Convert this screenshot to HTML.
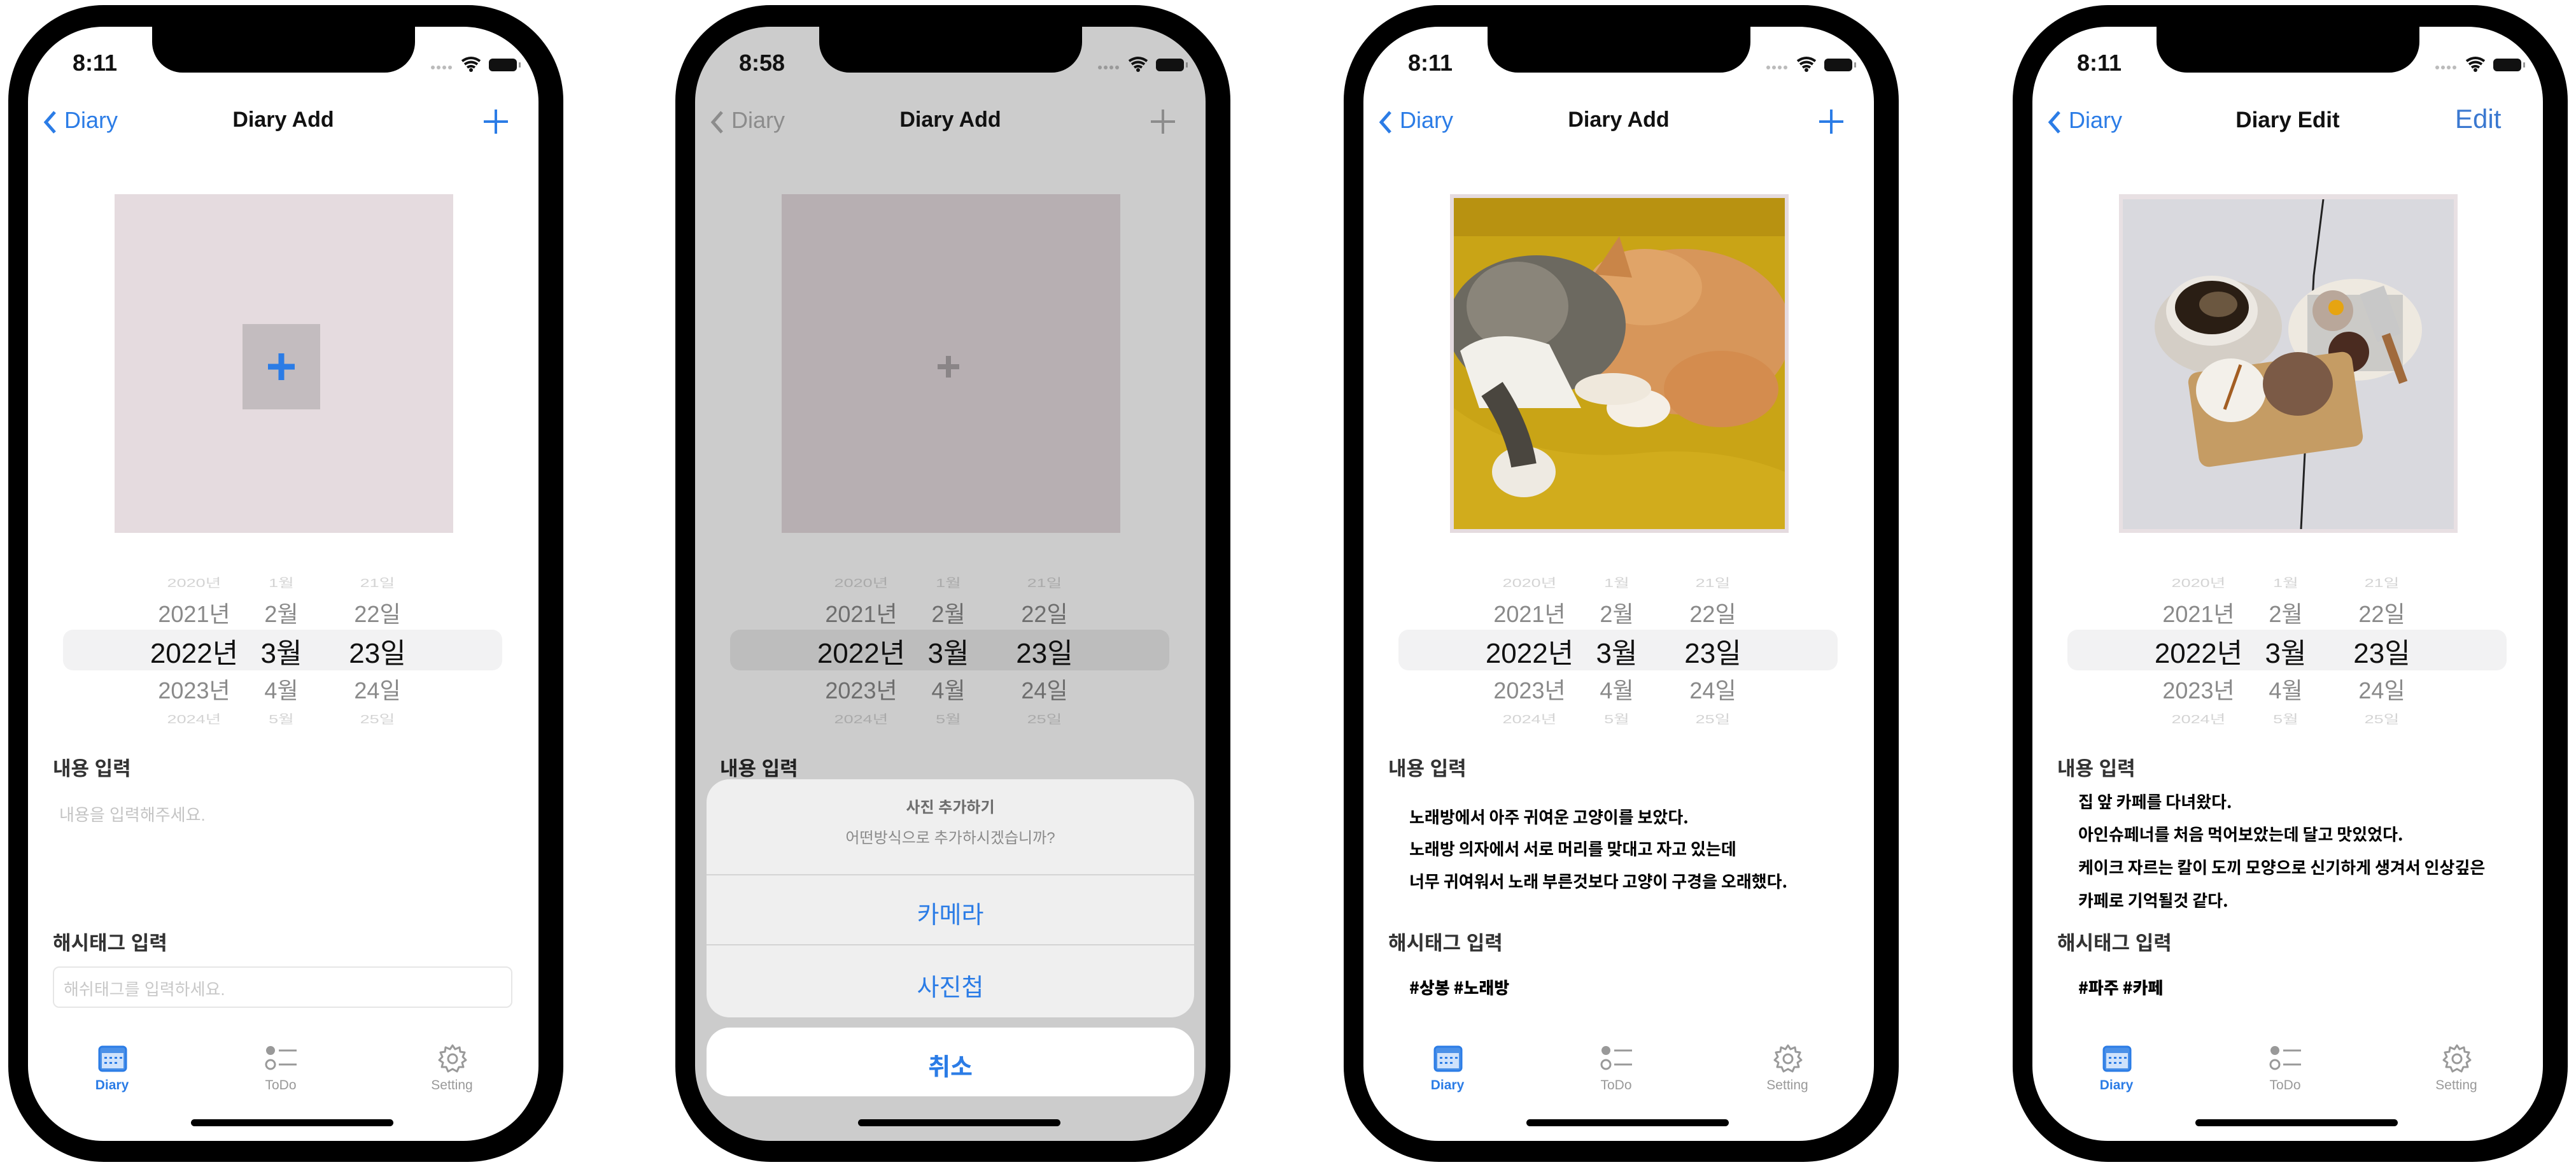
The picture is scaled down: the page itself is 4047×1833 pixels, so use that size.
<!DOCTYPE html>
<html><head><meta charset="utf-8"><style>
*{margin:0;padding:0;box-sizing:border-box}
body{width:4047px;height:1833px;background:#fff;position:relative;overflow:hidden;font-family:"Liberation Sans","Noto Sans CJK KR",sans-serif}
.ph{position:absolute;top:8px;width:872px;height:1817px;background:#000;border-radius:150px}
.sc{position:absolute;left:31px;top:34px;width:802px;height:1750px;background:#fff;border-radius:118px;overflow:hidden}
.a{position:absolute}
.notch{left:195px;top:-2px;width:413px;height:74px;background:#000;border-radius:0 0 48px 48px}
.time{left:60px;top:36px;font-size:36px;font-weight:bold;color:#111;width:90px;text-align:center}
.title{left:0;width:802px;text-align:center;top:127px;font-size:34px;font-weight:bold;color:#111}
.box{left:136px;top:263px;width:532px;height:532px;background:#e5dbdf}
.inner{left:201px;top:204px;width:122px;height:134px;background:#c3bcbf}
.band{left:55px;top:947px;width:690px;height:64px;background:#f2f2f3;border-radius:16px}
.pk{position:absolute;text-align:center;white-space:nowrap;transform:translate(-50%,-50%)}
.r0{font-size:27px;color:#d4d4d4;transform:translate(-50%,-50%) scaleY(.7)}
.r1{font-size:36px;color:#8a8a8a}
.r2{font-size:44px;color:#111}
.lab{left:39px;font-size:31px;font-weight:bold;color:#333}
.hw{left:72px;font-size:26px;color:#000;font-family:"Noto Sans CJK KR",sans-serif;font-weight:bold;white-space:nowrap}
.tab{font-size:21px;color:#999;text-align:center;width:120px;transform:translateX(-50%)}
.home{left:256px;top:1716px;width:318px;height:11px;border-radius:6px;background:#000}
</style></head><body>

<!-- PHONE 1 -->
<div class="ph" style="left:13px"><div class="sc">
<div class="a notch"></div>
<div class="a time">8:11</div>
<svg class="a" style="left:632px;top:44px" width="150" height="30" viewBox="0 0 150 30"><g fill="#bbb"><circle cx="4" cy="20" r="3"/><circle cx="13" cy="20" r="3"/><circle cx="22" cy="20" r="3"/><circle cx="31" cy="20" r="3"/></g><path d="M50 10 Q64 0 78 10 M54 15 Q64 8 74 15 M58 20 Q64 16 70 20" stroke="#111" stroke-width="4" fill="none"/><circle cx="64" cy="24" r="3" fill="#111"/><rect x="92" y="6" width="44" height="20" rx="6" fill="#111"/><rect x="139" y="12" width="3" height="8" fill="#999"/></svg>
<svg class="a" style="left:22px;top:130px" width="26" height="40"><path d="M20 4 L6 20 L20 36" stroke="#2b7ce6" stroke-width="5" fill="none"/></svg>
<div class="a" style="left:57px;top:126px;font-size:36px;color:#2b7ce6">Diary</div>
<div class="a title">Diary Add</div>
<svg class="a" style="left:714px;top:128px" width="42" height="42"><path d="M21 2V40M2 21H40" stroke="#2b7ce6" stroke-width="4"/></svg>
<div class="a box"><div class="a inner"><svg class="a" style="left:36px;top:42px" width="50" height="50"><path d="M25 4V46M4 25H46" stroke="#2b7ce6" stroke-width="9"/></svg></div></div>
<div class="a band"></div>
<div class="pk r0" style="left:261px;top:872px">2020년</div><div class="pk r0" style="left:398px;top:872px">1월</div><div class="pk r0" style="left:549px;top:872px">21일</div>
<div class="pk r1" style="left:261px;top:920px">2021년</div><div class="pk r1" style="left:398px;top:920px">2월</div><div class="pk r1" style="left:549px;top:920px">22일</div>
<div class="pk r2" style="left:261px;top:980px">2022년</div><div class="pk r2" style="left:398px;top:980px">3월</div><div class="pk r2" style="left:549px;top:980px">23일</div>
<div class="pk r1" style="left:261px;top:1040px">2023년</div><div class="pk r1" style="left:398px;top:1040px">4월</div><div class="pk r1" style="left:549px;top:1040px">24일</div>
<div class="pk r0" style="left:261px;top:1086px">2024년</div><div class="pk r0" style="left:398px;top:1086px">5월</div><div class="pk r0" style="left:549px;top:1086px">25일</div>
<div class="a lab" style="top:1140px">내용 입력</div>
<div class="a" style="left:49px;top:1218px;font-size:26px;color:#c4c4c4">내용을 입력해주세요.</div>
<div class="a lab" style="top:1414px">해시태그 입력</div>
<div class="a" style="left:39px;top:1476px;width:722px;height:65px;border:2px solid #e6e6e6;border-radius:10px"></div>
<div class="a" style="left:56px;top:1492px;font-size:26px;color:#c8c8c8">해쉬태그를 입력하세요.</div>
<svg class="a" style="left:110px;top:1598px" width="46" height="44"><rect x="2" y="4" width="42" height="38" rx="5" fill="#4a90e8" stroke="#2b7ce6" stroke-width="3"/><rect x="6" y="14" width="34" height="24" fill="#cfe2fb"/><g fill="#2b7ce6"><rect x="10" y="20" width="4" height="3"/><rect x="18" y="20" width="4" height="3"/><rect x="26" y="20" width="4" height="3"/><rect x="34" y="20" width="4" height="3"/><rect x="10" y="28" width="4" height="3"/><rect x="18" y="28" width="4" height="3"/><rect x="26" y="28" width="4" height="3"/></g></svg>
<div class="a tab" style="left:132px;top:1651px;color:#2b7ce6;font-weight:bold">Diary</div>
<svg class="a" style="left:372px;top:1598px" width="52" height="44"><circle cx="9" cy="10" r="7" fill="#999"/><circle cx="9" cy="32" r="7" fill="none" stroke="#999" stroke-width="3"/><path d="M22 10H50M22 32H50" stroke="#999" stroke-width="3"/></svg>
<div class="a tab" style="left:397px;top:1651px">ToDo</div>
<svg class="a" style="left:643px;top:1597px" width="48" height="48" viewBox="0 0 48 48"><circle cx="24" cy="24" r="7" fill="none" stroke="#999" stroke-width="3"/><path d="M24 3 L28 9 L35 6 L36 13 L43 14 L40 21 L45 26 L39 30 L41 37 L34 37 L31 44 L24 40 L17 44 L14 37 L7 37 L9 30 L3 26 L8 21 L5 14 L12 13 L13 6 L20 9 Z" fill="none" stroke="#999" stroke-width="3" stroke-linejoin="round"/></svg>
<div class="a tab" style="left:666px;top:1651px">Setting</div>
<div class="a home"></div>
</div></div>

<!-- PHONE 2 -->
<div class="ph" style="left:1061px"><div class="sc" style="background:#cccccc">
<div class="a notch"></div>
<div class="a time">8:58</div>
<svg class="a" style="left:632px;top:44px" width="150" height="30" viewBox="0 0 150 30"><g fill="#999"><circle cx="4" cy="20" r="3"/><circle cx="13" cy="20" r="3"/><circle cx="22" cy="20" r="3"/><circle cx="31" cy="20" r="3"/></g><path d="M50 10 Q64 0 78 10 M54 15 Q64 8 74 15 M58 20 Q64 16 70 20" stroke="#111" stroke-width="4" fill="none"/><circle cx="64" cy="24" r="3" fill="#111"/><rect x="92" y="6" width="44" height="20" rx="6" fill="#111"/><rect x="139" y="12" width="3" height="8" fill="#888"/></svg>
<svg class="a" style="left:22px;top:130px" width="26" height="40"><path d="M20 4 L6 20 L20 36" stroke="#8c8c8c" stroke-width="5" fill="none"/></svg>
<div class="a" style="left:57px;top:126px;font-size:36px;color:#8c8c8c">Diary</div>
<div class="a title">Diary Add</div>
<svg class="a" style="left:714px;top:128px" width="42" height="42"><path d="M21 2V40M2 21H40" stroke="#8c8c8c" stroke-width="4"/></svg>
<div class="a box" style="background:#b7afb2"><svg class="a" style="left:237px;top:246px" width="50" height="50"><path d="M25 8V42M8 25H42" stroke="#8a8587" stroke-width="8"/></svg></div>
<div class="a band" style="background:#bdbdbd"></div>
<div class="pk r0" style="left:261px;top:872px;color:#aaa">2020년</div><div class="pk r0" style="left:398px;top:872px;color:#aaa">1월</div><div class="pk r0" style="left:549px;top:872px;color:#aaa">21일</div>
<div class="pk r1" style="left:261px;top:920px;color:#6e6e6e">2021년</div><div class="pk r1" style="left:398px;top:920px;color:#6e6e6e">2월</div><div class="pk r1" style="left:549px;top:920px;color:#6e6e6e">22일</div>
<div class="pk r2" style="left:261px;top:980px">2022년</div><div class="pk r2" style="left:398px;top:980px">3월</div><div class="pk r2" style="left:549px;top:980px">23일</div>
<div class="pk r1" style="left:261px;top:1040px;color:#6e6e6e">2023년</div><div class="pk r1" style="left:398px;top:1040px;color:#6e6e6e">4월</div><div class="pk r1" style="left:549px;top:1040px;color:#6e6e6e">24일</div>
<div class="pk r0" style="left:261px;top:1086px;color:#aaa">2024년</div><div class="pk r0" style="left:398px;top:1086px;color:#aaa">5월</div><div class="pk r0" style="left:549px;top:1086px;color:#aaa">25일</div>
<div class="a lab" style="top:1140px;color:#222">내용 입력</div>
<div class="a" style="left:18px;top:1182px;width:766px;height:374px;background:#efefef;border-radius:36px"></div>
<div class="a" style="left:18px;top:1206px;width:766px;text-align:center;font-size:24px;color:#6e6e6e;font-weight:bold">사진 추가하기</div>
<div class="a" style="left:18px;top:1254px;width:766px;text-align:center;font-size:24px;color:#8a8a8a">어떤방식으로 추가하시겠습니까?</div>
<div class="a" style="left:18px;top:1331px;width:766px;height:2px;background:#d4d4d4"></div>
<div class="a" style="left:18px;top:1364px;width:766px;text-align:center;font-size:38px;color:#2b7ce6">카메라</div>
<div class="a" style="left:18px;top:1441px;width:766px;height:2px;background:#d4d4d4"></div>
<div class="a" style="left:18px;top:1478px;width:766px;text-align:center;font-size:38px;color:#2b7ce6">사진첩</div>
<div class="a" style="left:18px;top:1572px;width:766px;height:108px;background:#fff;border-radius:36px"></div>
<div class="a" style="left:18px;top:1603px;width:766px;text-align:center;font-size:38px;color:#2b7ce6;font-weight:bold">취소</div>
<div class="a home"></div>
</div></div>

<!-- PHONE 3 -->
<div class="ph" style="left:2111px"><div class="sc">
<div class="a notch"></div>
<div class="a time">8:11</div>
<svg class="a" style="left:632px;top:44px" width="150" height="30" viewBox="0 0 150 30"><g fill="#bbb"><circle cx="4" cy="20" r="3"/><circle cx="13" cy="20" r="3"/><circle cx="22" cy="20" r="3"/><circle cx="31" cy="20" r="3"/></g><path d="M50 10 Q64 0 78 10 M54 15 Q64 8 74 15 M58 20 Q64 16 70 20" stroke="#111" stroke-width="4" fill="none"/><circle cx="64" cy="24" r="3" fill="#111"/><rect x="92" y="6" width="44" height="20" rx="6" fill="#111"/><rect x="139" y="12" width="3" height="8" fill="#999"/></svg>
<svg class="a" style="left:22px;top:130px" width="26" height="40"><path d="M20 4 L6 20 L20 36" stroke="#2b7ce6" stroke-width="5" fill="none"/></svg>
<div class="a" style="left:57px;top:126px;font-size:36px;color:#2b7ce6">Diary</div>
<div class="a title">Diary Add</div>
<svg class="a" style="left:714px;top:128px" width="42" height="42"><path d="M21 2V40M2 21H40" stroke="#2b7ce6" stroke-width="4"/></svg>
<div class="a box" style="background:#e5dbdf">
<svg class="a" style="left:6px;top:6px" width="520" height="520" viewBox="0 0 520 520">
<rect width="520" height="520" fill="#c9a416"/>
<rect y="0" width="520" height="60" fill="#b89211"/>
<path d="M0 330 Q120 420 300 400 Q420 390 520 430 L520 520 L0 520Z" fill="#d1ac1c"/>
<ellipse cx="360" cy="210" rx="170" ry="130" fill="#d7965a"/>
<ellipse cx="300" cy="140" rx="90" ry="60" fill="#e0a468"/>
<path d="M220 120 L260 60 L280 125Z" fill="#c98548"/>
<ellipse cx="420" cy="300" rx="90" ry="60" fill="#d48c4e"/>
<ellipse cx="130" cy="200" rx="140" ry="110" fill="#6c6960"/>
<ellipse cx="100" cy="170" rx="80" ry="70" fill="#8a857a"/>
<path d="M10 240 Q60 200 150 230 L200 330 L40 330Z" fill="#f2f0ea"/>
<ellipse cx="110" cy="430" rx="50" ry="40" fill="#eeeae2"/>
<path d="M60 300 Q100 360 110 420" stroke="#4a463f" stroke-width="40" fill="none"/>
<ellipse cx="290" cy="330" rx="50" ry="30" fill="#f5efe6"/>
<ellipse cx="250" cy="300" rx="60" ry="25" fill="#efe8dc"/>
</svg></div>
<div class="a band"></div>
<div class="pk r0" style="left:261px;top:872px">2020년</div><div class="pk r0" style="left:398px;top:872px">1월</div><div class="pk r0" style="left:549px;top:872px">21일</div>
<div class="pk r1" style="left:261px;top:920px">2021년</div><div class="pk r1" style="left:398px;top:920px">2월</div><div class="pk r1" style="left:549px;top:920px">22일</div>
<div class="pk r2" style="left:261px;top:980px">2022년</div><div class="pk r2" style="left:398px;top:980px">3월</div><div class="pk r2" style="left:549px;top:980px">23일</div>
<div class="pk r1" style="left:261px;top:1040px">2023년</div><div class="pk r1" style="left:398px;top:1040px">4월</div><div class="pk r1" style="left:549px;top:1040px">24일</div>
<div class="pk r0" style="left:261px;top:1086px">2024년</div><div class="pk r0" style="left:398px;top:1086px">5월</div><div class="pk r0" style="left:549px;top:1086px">25일</div>
<div class="a lab" style="top:1140px">내용 입력</div>
<div class="a hw" style="top:1222px">노래방에서 아주 귀여운 고양이를 보았다.</div>
<div class="a hw" style="top:1272px">노래방 의자에서 서로 머리를 맞대고 자고 있는데</div>
<div class="a hw" style="top:1323px">너무 귀여워서 노래 부른것보다 고양이 구경을 오래했다.</div>
<div class="a lab" style="top:1414px">해시태그 입력</div>
<div class="a hw" style="top:1490px;font-weight:900">#상봉 #노래방</div>
<svg class="a" style="left:110px;top:1598px" width="46" height="44"><rect x="2" y="4" width="42" height="38" rx="5" fill="#4a90e8" stroke="#2b7ce6" stroke-width="3"/><rect x="6" y="14" width="34" height="24" fill="#cfe2fb"/><g fill="#2b7ce6"><rect x="10" y="20" width="4" height="3"/><rect x="18" y="20" width="4" height="3"/><rect x="26" y="20" width="4" height="3"/><rect x="34" y="20" width="4" height="3"/><rect x="10" y="28" width="4" height="3"/><rect x="18" y="28" width="4" height="3"/><rect x="26" y="28" width="4" height="3"/></g></svg>
<div class="a tab" style="left:132px;top:1651px;color:#2b7ce6;font-weight:bold">Diary</div>
<svg class="a" style="left:372px;top:1598px" width="52" height="44"><circle cx="9" cy="10" r="7" fill="#999"/><circle cx="9" cy="32" r="7" fill="none" stroke="#999" stroke-width="3"/><path d="M22 10H50M22 32H50" stroke="#999" stroke-width="3"/></svg>
<div class="a tab" style="left:397px;top:1651px">ToDo</div>
<svg class="a" style="left:643px;top:1597px" width="48" height="48" viewBox="0 0 48 48"><circle cx="24" cy="24" r="7" fill="none" stroke="#999" stroke-width="3"/><path d="M24 3 L28 9 L35 6 L36 13 L43 14 L40 21 L45 26 L39 30 L41 37 L34 37 L31 44 L24 40 L17 44 L14 37 L7 37 L9 30 L3 26 L8 21 L5 14 L12 13 L13 6 L20 9 Z" fill="none" stroke="#999" stroke-width="3" stroke-linejoin="round"/></svg>
<div class="a tab" style="left:666px;top:1651px">Setting</div>
<div class="a home"></div>
</div></div>

<!-- PHONE 4 -->
<div class="ph" style="left:3162px"><div class="sc">
<div class="a notch"></div>
<div class="a time">8:11</div>
<svg class="a" style="left:632px;top:44px" width="150" height="30" viewBox="0 0 150 30"><g fill="#bbb"><circle cx="4" cy="20" r="3"/><circle cx="13" cy="20" r="3"/><circle cx="22" cy="20" r="3"/><circle cx="31" cy="20" r="3"/></g><path d="M50 10 Q64 0 78 10 M54 15 Q64 8 74 15 M58 20 Q64 16 70 20" stroke="#111" stroke-width="4" fill="none"/><circle cx="64" cy="24" r="3" fill="#111"/><rect x="92" y="6" width="44" height="20" rx="6" fill="#111"/><rect x="139" y="12" width="3" height="8" fill="#999"/></svg>
<svg class="a" style="left:22px;top:130px" width="26" height="40"><path d="M20 4 L6 20 L20 36" stroke="#2b7ce6" stroke-width="5" fill="none"/></svg>
<div class="a" style="left:57px;top:126px;font-size:36px;color:#2b7ce6">Diary</div>
<div class="a title" style="font-size:35px">Diary Edit</div>
<div class="a" style="left:664px;top:121px;font-size:42px;color:#3a78d0">Edit</div>
<div class="a box" style="background:#e8e0e3">
<svg class="a" style="left:6px;top:8px" width="520" height="518" viewBox="0 0 520 518">
<rect width="520" height="518" fill="#d9d9de"/>
<path d="M315 0 L300 120 L280 518" stroke="#222" stroke-width="3" fill="none"/>
<ellipse cx="150" cy="200" rx="100" ry="75" fill="#d4cec6"/>
<ellipse cx="140" cy="175" rx="72" ry="55" fill="#ece8e2"/>
<ellipse cx="140" cy="170" rx="58" ry="42" fill="#2a1e14"/>
<ellipse cx="150" cy="165" rx="30" ry="20" fill="#6b5740"/>
<ellipse cx="365" cy="205" rx="105" ry="80" fill="#eee9e0"/>
<rect x="290" y="150" width="150" height="120" fill="#bcbcbc" opacity=".7"/>
<circle cx="330" cy="175" r="32" fill="#b9a79a"/><circle cx="335" cy="170" r="12" fill="#e6a411"/>
<circle cx="355" cy="240" r="32" fill="#4a2b20"/>
<rect x="385" y="140" width="40" height="80" fill="#c8c8c8" transform="rotate(-20 405 180)"/>
<rect x="420" y="210" width="14" height="80" fill="#a06a3c" transform="rotate(-20 427 250)"/>
<rect x="110" y="255" width="260" height="150" rx="16" fill="#c59c64" transform="rotate(-8 240 330)"/>
<ellipse cx="170" cy="300" rx="55" ry="50" fill="#f3f0ea"/>
<ellipse cx="275" cy="290" rx="55" ry="50" fill="#7b5a46"/>
<path d="M185 260 L160 330" stroke="#a35e23" stroke-width="5"/>
</svg></div>
<div class="a band"></div>
<div class="pk r0" style="left:261px;top:872px">2020년</div><div class="pk r0" style="left:398px;top:872px">1월</div><div class="pk r0" style="left:549px;top:872px">21일</div>
<div class="pk r1" style="left:261px;top:920px">2021년</div><div class="pk r1" style="left:398px;top:920px">2월</div><div class="pk r1" style="left:549px;top:920px">22일</div>
<div class="pk r2" style="left:261px;top:980px">2022년</div><div class="pk r2" style="left:398px;top:980px">3월</div><div class="pk r2" style="left:549px;top:980px">23일</div>
<div class="pk r1" style="left:261px;top:1040px">2023년</div><div class="pk r1" style="left:398px;top:1040px">4월</div><div class="pk r1" style="left:549px;top:1040px">24일</div>
<div class="pk r0" style="left:261px;top:1086px">2024년</div><div class="pk r0" style="left:398px;top:1086px">5월</div><div class="pk r0" style="left:549px;top:1086px">25일</div>
<div class="a lab" style="top:1140px">내용 입력</div>
<div class="a hw" style="top:1198px">집 앞 카페를 다녀왔다.</div>
<div class="a hw" style="top:1249px">아인슈페너를 처음 먹어보았는데 달고 맛있었다.</div>
<div class="a hw" style="top:1301px">케이크 자르는 칼이 도끼 모양으로 신기하게 생겨서 인상깊은</div>
<div class="a hw" style="top:1353px">카페로 기억될것 같다.</div>
<div class="a lab" style="top:1414px">해시태그 입력</div>
<div class="a hw" style="top:1490px;font-weight:900">#파주 #카페</div>
<svg class="a" style="left:110px;top:1598px" width="46" height="44"><rect x="2" y="4" width="42" height="38" rx="5" fill="#4a90e8" stroke="#2b7ce6" stroke-width="3"/><rect x="6" y="14" width="34" height="24" fill="#cfe2fb"/><g fill="#2b7ce6"><rect x="10" y="20" width="4" height="3"/><rect x="18" y="20" width="4" height="3"/><rect x="26" y="20" width="4" height="3"/><rect x="34" y="20" width="4" height="3"/><rect x="10" y="28" width="4" height="3"/><rect x="18" y="28" width="4" height="3"/><rect x="26" y="28" width="4" height="3"/></g></svg>
<div class="a tab" style="left:132px;top:1651px;color:#2b7ce6;font-weight:bold">Diary</div>
<svg class="a" style="left:372px;top:1598px" width="52" height="44"><circle cx="9" cy="10" r="7" fill="#999"/><circle cx="9" cy="32" r="7" fill="none" stroke="#999" stroke-width="3"/><path d="M22 10H50M22 32H50" stroke="#999" stroke-width="3"/></svg>
<div class="a tab" style="left:397px;top:1651px">ToDo</div>
<svg class="a" style="left:643px;top:1597px" width="48" height="48" viewBox="0 0 48 48"><circle cx="24" cy="24" r="7" fill="none" stroke="#999" stroke-width="3"/><path d="M24 3 L28 9 L35 6 L36 13 L43 14 L40 21 L45 26 L39 30 L41 37 L34 37 L31 44 L24 40 L17 44 L14 37 L7 37 L9 30 L3 26 L8 21 L5 14 L12 13 L13 6 L20 9 Z" fill="none" stroke="#999" stroke-width="3" stroke-linejoin="round"/></svg>
<div class="a tab" style="left:666px;top:1651px">Setting</div>
<div class="a home"></div>
</div></div>

</body></html>
